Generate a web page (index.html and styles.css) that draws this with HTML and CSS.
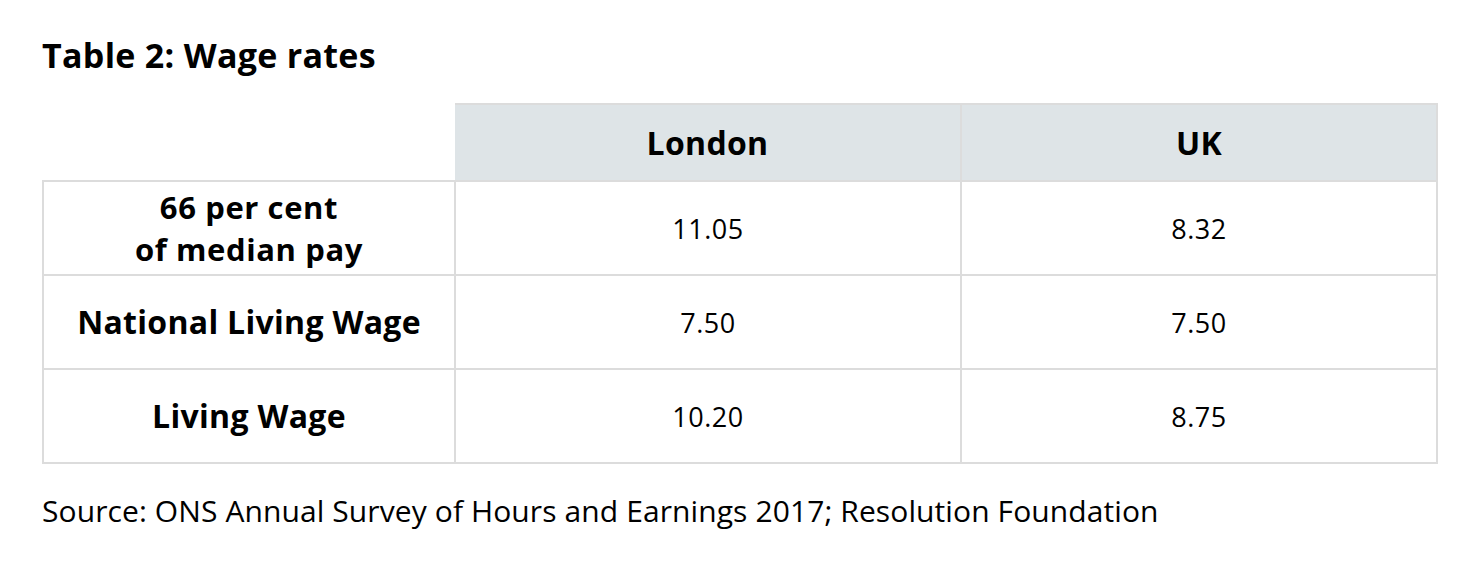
FILE: index.html
```html
<!DOCTYPE html>
<html>
<head>
<meta charset="utf-8">
<link rel="stylesheet" href="styles.css">
</head>
<body>
<div class="page">
  <h1 class="title">Table 2: Wage rates</h1>
  <table class="wages">
    <colgroup>
      <col class="c-label">
      <col class="c-london">
      <col class="c-uk">
    </colgroup>
    <thead>
      <tr class="head-row">
        <th class="blank"></th>
        <th class="head">London</th>
        <th class="head">UK</th>
      </tr>
    </thead>
    <tbody>
      <tr>
        <th class="label label-two">66 per cent<br>of median pay</th>
        <td>11.05</td>
        <td>8.32</td>
      </tr>
      <tr>
        <th class="label">National Living Wage</th>
        <td>7.50</td>
        <td>7.50</td>
      </tr>
      <tr>
        <th class="label">Living Wage</th>
        <td>10.20</td>
        <td>8.75</td>
      </tr>
    </tbody>
  </table>
  <p class="source">Source: ONS Annual Survey of Hours and Earnings 2017; Resolution Foundation</p>
</div>
</body>
</html>
```

FILE: styles.css
```css
html, body {
  margin: 0;
  padding: 0;
  background: #ffffff;
}
body {
  font-family: "Open Sans", "Liberation Sans", sans-serif;
  color: #000;
}
.page {
  padding: 32px 0 0 42px;
}
.title {
  margin: 0;
  font-size: 34px;
  font-weight: 700;
  line-height: 46px;
  letter-spacing: 0.3px;
}
.wages {
  margin-top: 25px;
  border-collapse: collapse;
  table-layout: fixed;
  width: 1394px;
}
.c-label { width: 412px; }
.c-london { width: 506px; }
.c-uk { width: 476px; }
.head-row { height: 77px; }
.blank {
  border: none;
  background: #fff;
}
.head {
  background: #dee4e7;
  border-top: 2px solid #dcdcdc;
  border-right: 2px solid #dcdcdc;
  font-size: 32px;
  font-weight: 700;
  letter-spacing: 0.3px;
  text-align: center;
  padding: 0;
}
tbody tr { height: 94px; }
tbody th, tbody td {
  border: 2px solid #dcdcdc;
  text-align: center;
  padding: 0;
}
.label {
  font-size: 32px;
  font-weight: 700;
  line-height: 44px;
  letter-spacing: 0.3px;
}
.label-two {
  font-size: 31px;
  line-height: 42px;
  letter-spacing: 0.6px;
}
td {
  font-size: 27px;
  font-weight: 400;
  letter-spacing: 0.5px;
}
.source {
  margin: 26px 0 0;
  font-size: 30px;
  font-weight: 400;
  line-height: 42px;
  letter-spacing: 0.1px;
}
```
